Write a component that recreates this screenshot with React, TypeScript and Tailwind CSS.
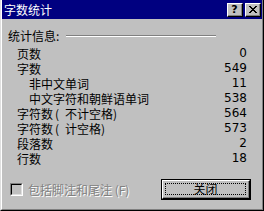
import React from "react";

const rows = [
  { label: "页数", val: "0", sub: false },
  { label: "字数", val: "549", sub: false },
  { label: "非中文单词", val: "11", sub: true },
  { label: "中文字符和朝鲜语单词", val: "538", sub: true },
  { label: "字符数（不计空格）", val: "564", sub: false },
  { label: "字符数（计空格）", val: "573", sub: false },
  { label: "段落数", val: "2", sub: false },
  { label: "行数", val: "18", sub: false },
];

const cjk = { fontFamily: '"Noto Sans CJK SC", "Noto Sans", sans-serif' };

// full-width brackets take a whole 12px cell, as in the bitmap font
function Label({ text }: { text: string }) {
  return (
    <>
      {text.split(/([（）])/).map((part, i) =>
        part === "（" ? (
          <span key={i} className="inline-block w-[12px] pl-[2px]">(</span>
        ) : part === "）" ? (
          <span key={i} className="inline-block w-[12px]">)</span>
        ) : (
          <React.Fragment key={i}>{part}</React.Fragment>
        )
      )}
    </>
  );
}

function CaptionButton({ children }: { children: React.ReactNode }) {
  return (
    <div className="w-[16px] h-[14px] bg-[#c0c0c0] border-t border-l border-t-white border-l-white border-b border-r border-b-black border-r-black">
      <div className="w-full h-full border-b border-r border-b-[#808080] border-r-[#808080] flex items-center justify-center">
        {children}
      </div>
    </div>
  );
}

export default function App() {
  return (
    <div className="w-[264px] h-[211px] bg-[#c0c0c0] overflow-hidden" style={cjk}>
      <div className="w-full h-full border-l border-l-[#dfdfdf] border-r border-r-black border-b border-b-black">
        <div className="w-full h-full border-l border-l-white border-r border-r-[#808080] border-b border-b-[#808080] flex flex-col">
          {/* Title bar */}
          <div className="h-[19px] bg-[#000080] flex items-center justify-between pl-[2px] pr-[1px]">
            <span className="text-white text-[12px] leading-[14px]">字数统计</span>
            <div className="flex items-center gap-[2px]">
              <CaptionButton>
                <span className="text-black text-[11px] leading-none font-bold" style={{ fontFamily: '"DejaVu Sans", sans-serif' }}>?</span>
              </CaptionButton>
              <CaptionButton>
                <svg width="8" height="7" viewBox="0 0 8 7" shapeRendering="crispEdges">
                  <path d="M0 0h2v1h-2zM6 0h2v1h-2zM1 1h2v1h-2zM5 1h2v1h-2zM2 2h4v1h-4zM3 3h2v1h-2zM2 4h4v1h-4zM1 5h2v1h-2zM5 5h2v1h-2zM0 6h2v1h-2zM6 6h2v1h-2z" fill="#000" />
                </svg>
              </CaptionButton>
            </div>
          </div>

          {/* Body */}
          <div className="flex flex-col pl-[6px] pr-[15px]">
            <div className="flex items-center mt-[9px] h-[15px]">
              <span className="text-[12px] leading-[15px] text-black">统计信息:</span>
              <div className="ml-[7px] w-[150px] border-t border-t-[#808080] border-b border-b-white" />
            </div>

            <div className="flex flex-col mt-[3px] pl-[9px]">
              {rows.map((r) => (
                <div key={r.label} className="flex justify-between h-[15px] items-center overflow-hidden">
                  <span className={`text-[12px] leading-[13px] text-black ${r.sub ? "pl-[12px]" : ""}`}>
                    <Label text={r.label} />
                  </span>
                  <span className="text-[12px] leading-[13px] text-black" style={{ fontFamily: '"DejaVu Sans", sans-serif' }}>{r.val}</span>
                </div>
              ))}
            </div>

            <div className="flex items-center justify-between mt-[13px]">
              <div className="flex items-center ml-[2px] gap-[5px]">
                <div className="w-[13px] h-[13px] border-t border-l border-t-[#808080] border-l-[#808080] border-b border-r border-b-white border-r-white">
                  <div className="w-full h-full border-t border-l border-t-black border-l-black border-b border-r border-b-[#dfdfdf] border-r-[#dfdfdf] bg-[#c0c0c0]" />
                </div>
                <span className="text-[12px] leading-[15px] text-[#808080]" style={{ textShadow: "1px 1px 0 #ffffff" }}>
                  包括脚注和尾注 (F)
                </span>
              </div>
              <div className="w-[90px] h-[21px] border border-black mr-[-4px]">
                <div className="w-full h-full border-t border-l border-t-white border-l-white border-b border-r border-b-black border-r-black">
                  <div className="w-full h-full border-b border-r border-b-[#808080] border-r-[#808080] p-[2px]">
                    <div className="w-full h-full border border-dotted border-black flex items-center justify-center">
                      <span className="text-[12px] leading-none text-black">关闭</span>
                    </div>
                  </div>
                </div>
              </div>
            </div>
          </div>
        </div>
      </div>
    </div>
  );
}
